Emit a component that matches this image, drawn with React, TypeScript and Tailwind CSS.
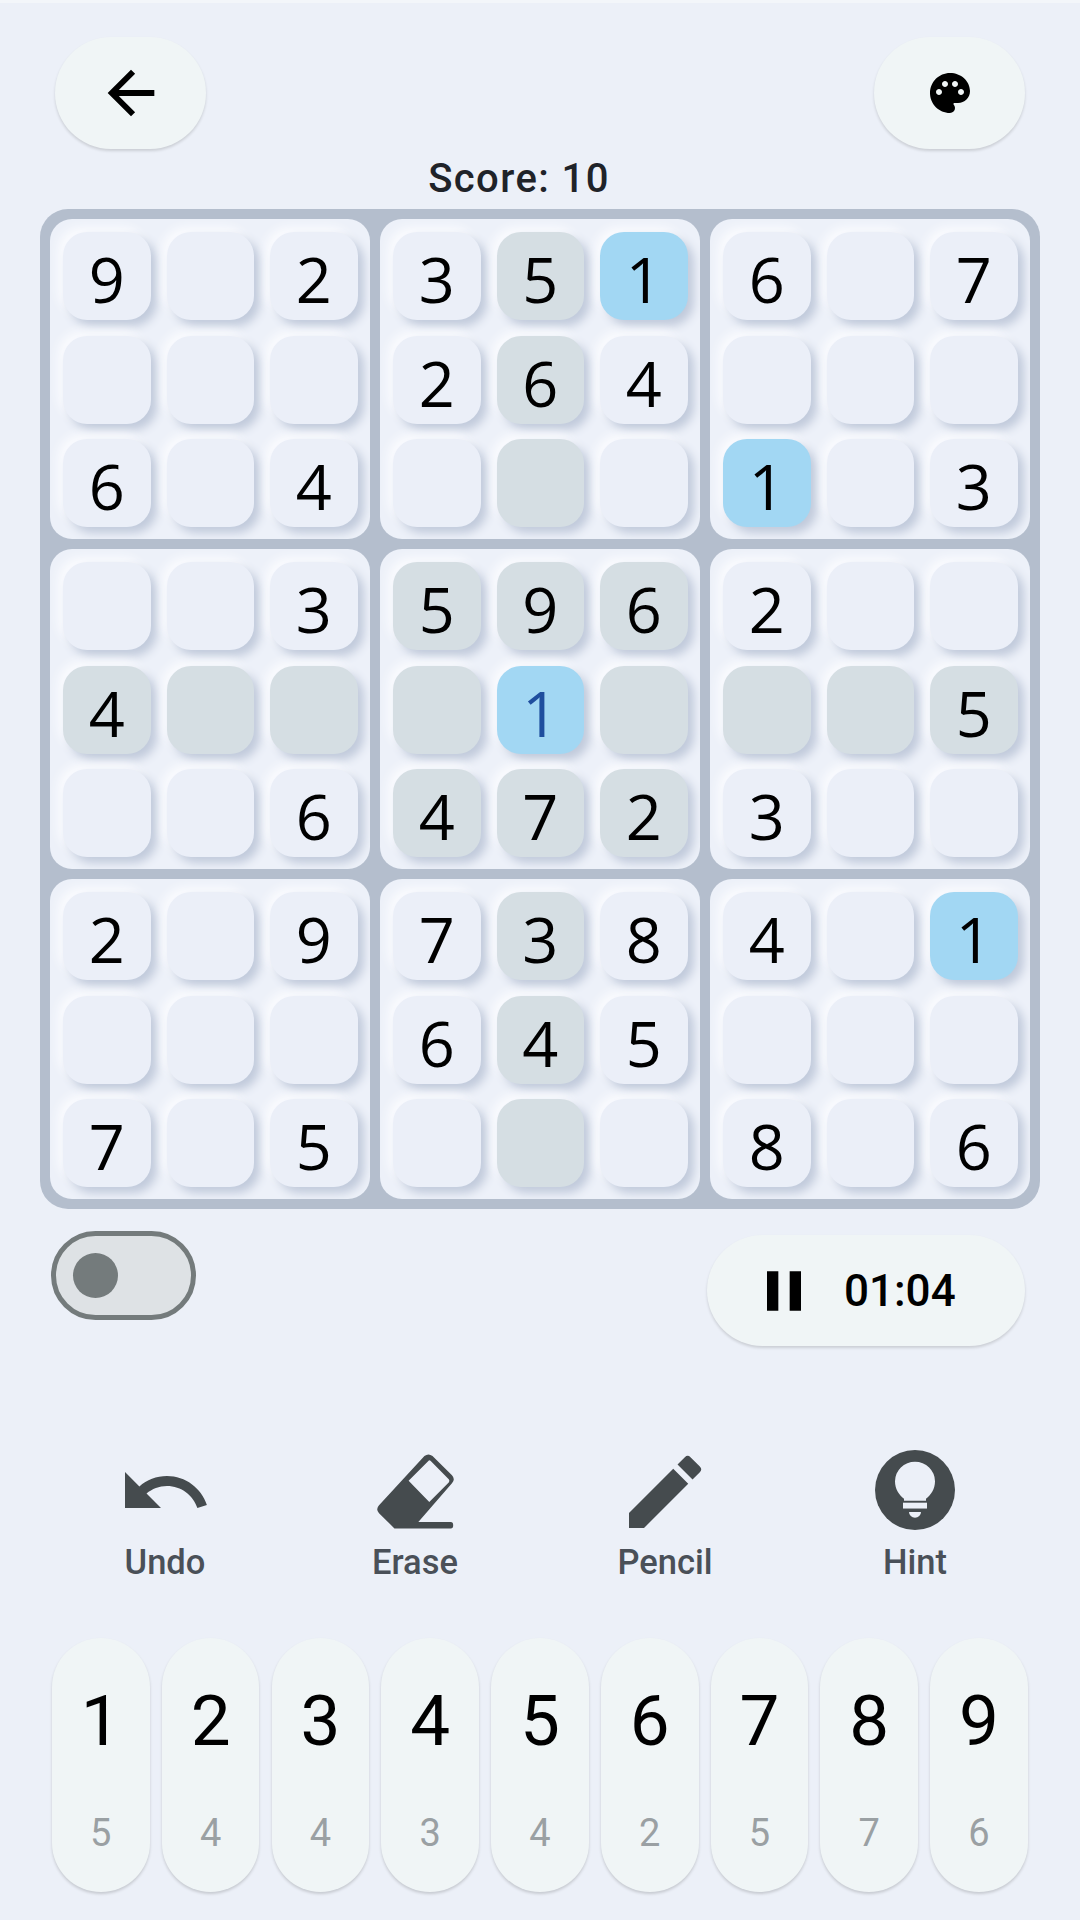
import React from "react";
import { MdArrowBack, MdPalette, MdPause, MdUndo, MdEdit } from "react-icons/md";

const boxes: string[][] = [
  ["9", "", "2", "", "", "", "6", "", "4"],
  ["3", "5h", "1b", "2", "6h", "4", "", "h", ""],
  ["6", "", "7", "", "", "", "1b", "", "3"],
  ["", "", "3", "4h", "h", "h", "", "", "6"],
  ["5h", "9h", "6h", "h", "1s", "h", "4h", "7h", "2h"],
  ["2", "", "", "h", "h", "5h", "3", "", ""],
  ["2", "", "9", "", "", "", "7", "", "5"],
  ["7", "3h", "8", "6", "4h", "5", "", "h", ""],
  ["4", "", "1b", "", "", "", "8", "", "6"],
];

const pad = [
  ["1", "5"], ["2", "4"], ["3", "4"], ["4", "3"], ["5", "4"], ["6", "2"], ["7", "5"], ["8", "7"], ["9", "6"],
];

function Cell({ v }: { v: string }) {
  const digit = v.replace(/[a-z]/g, "");
  const kind = v.replace(/[0-9]/g, "");
  const bg = kind === "h" ? "bg-[#d5dee3]" : kind === "b" || kind === "s" ? "bg-[#a2d7f3]" : "bg-[#ebeff8]";
  const color = kind === "s" ? "text-[#1f4e9e]" : "text-black";
  return (
    <div className={`w-[87.5px] h-[88px] rounded-[24px] flex items-center justify-center pt-[5px] font-['Open_Sans',sans-serif] font-[370] text-[63px] leading-none shadow-[6px_6px_10px_#c1cadb,-5px_-5px_10px_#fafbfe] ${bg} ${color}`}>
      {digit}
    </div>
  );
}

function Eraser() {
  return (
    <svg width="77" height="76" viewBox="0 0 19 19" preserveAspectRatio="none" fill="#454b4e">
      <path
        fillRule="evenodd"
        d="M11.7.5Q12.7-.3 13.7.5L18.5 5.3Q19.4 6.3 18.5 7.3L10.2 17H18.2Q18.8 17 18.8 17.8 18.8 18.6 18.2 18.6H4.3L.5 14.8Q-.4 13.8.5 12.8ZM12.8 1.6 7.8 6.7 12.9 12 17.7 7.1Q18 6.7 17.7 6.3L13.2 1.7Q13 1.5 12.8 1.6Z"
      />
    </svg>
  );
}

function Hint() {
  return (
    <svg width="80" height="80" viewBox="0 0 80 82" preserveAspectRatio="none">
      <ellipse cx="40" cy="41" rx="40" ry="41" fill="#454b4e" />
      <path d="M40 12a20 20 0 0 1 20 20c0 8-4 14-9 18v2H29v-2c-5-4-9-10-9-18a20 20 0 0 1 20-20Z" fill="#ecf0f8" />
      <rect x="28" y="54" width="24" height="6" fill="#ecf0f8" />
      <path d="M34 63.500H46A6 6 0 0 1 34 63.500Z" fill="#ecf0f8" />
    </svg>
  );
}

function Tool({ icon, label }: { icon: React.ReactNode; label: string }) {
  return (
    <div className="w-[250px] flex flex-col items-center">
      <div className="h-[84px] flex items-end justify-center">{icon}</div>
      <div className="mt-[10px] font-['Roboto',sans-serif] font-medium text-[34.5px] leading-[44px] text-[#4a5058]">{label}</div>
    </div>
  );
}

export default function App() {
  return (
    <div className="w-[1080px] h-[1920px] overflow-hidden bg-[#ecf0f8] flex flex-col font-['Roboto',sans-serif]">
      <div className="h-[3px] bg-[#f3f6fa]" />
      <div className="flex justify-between px-[55px] pt-[34px]">
        <div className="w-[151px] h-[112px] rounded-full bg-[#f0f5f6] shadow-[0_2px_3px_rgba(0,0,0,0.14)] flex items-center justify-center">
          <MdArrowBack size={70} color="#000" />
        </div>
        <div className="w-[151px] h-[112px] rounded-full bg-[#f0f5f6] shadow-[0_2px_3px_rgba(0,0,0,0.14)] flex items-center justify-center">
          <MdPalette size={48} color="#000" />
        </div>
      </div>
      <div className="h-[60px] flex items-center justify-center pr-[42px] text-[40px] tracking-[1.4px] font-medium text-[#1f2329]">Score: 10</div>
      <div className="mx-[40px] w-[1000px] h-[1000px] p-[10px] rounded-[28px] bg-[#b4becd] grid grid-cols-3 gap-[10px]">
        {boxes.map((b, i) => (
          <div key={i} className="w-[320px] h-[320px] overflow-hidden rounded-[22px] bg-[#edf1f9] pt-[13px] pl-[13px] grid grid-cols-[repeat(3,87.5px)] grid-rows-[repeat(3,88px)] gap-x-[16px] gap-y-[15.5px]">
            {b.map((v, j) => (
              <Cell key={j} v={v} />
            ))}
          </div>
        ))}
      </div>
      <div className="flex justify-between items-start pl-[51px] pr-[55px] pt-[22px]">
        <div className="w-[145px] h-[89px] rounded-full border-[5px] border-[#747b7c] bg-[#dee2e5] flex items-center pl-[17px]">
          <div className="w-[45px] h-[45px] rounded-full bg-[#747b7c]" />
        </div>
        <div className="mt-[4px] w-[318px] h-[111px] rounded-full bg-[#f0f5f6] shadow-[0_2px_3px_rgba(0,0,0,0.14)] flex items-center pl-[43px]">
          <MdPause size={68} color="#000" />
          <span className="ml-[26px] text-[44px] text-black font-medium">01:04</span>
        </div>
      </div>
      <div className="flex justify-between px-[40px] mt-[100px]">
        <Tool icon={<MdUndo size={96} color="#454b4e" className="-mb-[10px]" />} label="Undo" />
        <Tool icon={<Eraser />} label="Erase" />
        <Tool icon={<MdEdit size={96} color="#454b4e" className="-mb-[10px]" />} label="Pencil" />
        <Tool icon={<Hint />} label="Hint" />
      </div>
      <div className="flex gap-[12.2px] pl-[52px] mt-[54px]">
        {pad.map(([d, c]) => (
          <div key={d} className="w-[97.6px] h-[254px] rounded-full bg-[#f0f5f6] shadow-[0_2px_3px_rgba(0,0,0,0.16)] flex flex-col items-center">
            <div className="mt-[47px] text-[71px] leading-[72px] text-black">{d}</div>
            <div className="mt-[56px] text-[38px] leading-[40px] text-[#9aa0a3]">{c}</div>
          </div>
        ))}
      </div>
    </div>
  );
}
